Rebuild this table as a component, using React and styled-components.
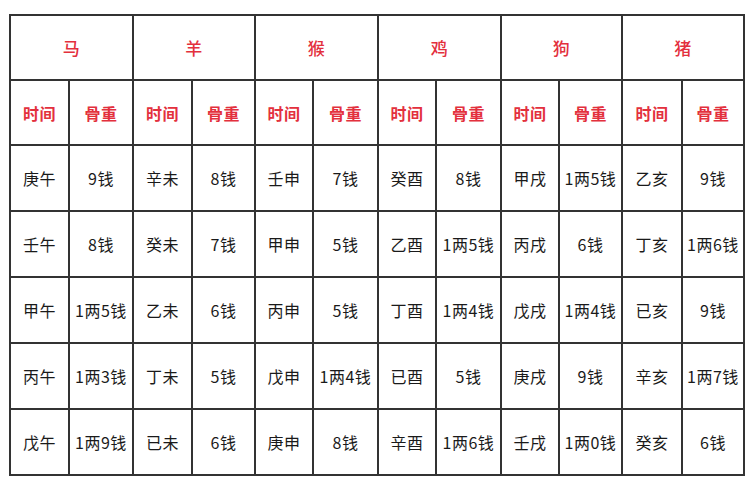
import React from 'react';
import styled, { createGlobalStyle } from 'styled-components';

const GlobalStyle = createGlobalStyle`
  html, body {
    margin: 0;
    padding: 0;
    background: #fff;
  }
  body {
    font-family: "Noto Sans CJK SC", "Noto Sans", sans-serif;
  }
`;

const Page = styled.div`
  width: 750px;
  height: 500px;
  padding: 14px 0 0 9px;
  box-sizing: border-box;
  background: #fff;
`;

const Table = styled.table`
  border-collapse: collapse;
  table-layout: fixed;
  width: 736px;
  border: 2px solid #333;
`;

const Cell = styled.td`
  border: 2px solid #333;
  height: ${p => p.$h || 62}px;
  padding: 0;
  text-align: center;
  vertical-align: middle;
  font-size: 16px;
  color: #1a1a1a;
  white-space: nowrap;
  letter-spacing: 0.5px;
`;

const HeadCell = styled(Cell).attrs({ as: 'th' })`
  color: #e3303d;
  font-weight: ${p => (p.$big ? 500 : 700)};
  font-size: ${p => (p.$big ? 17 : 16)}px;
`;

const Col = styled.col`
  width: ${p => p.$w}px;
`;

const widths = [59, 64, 59, 63, 58, 65, 58, 65, 58, 63, 60, 62];

const groups = [
  { name: '马', rows: [['庚午', '9钱'], ['壬午', '8钱'], ['甲午', '1两5钱'], ['丙午', '1两3钱'], ['戊午', '1两9钱']] },
  { name: '羊', rows: [['辛未', '8钱'], ['癸未', '7钱'], ['乙未', '6钱'], ['丁未', '5钱'], ['已未', '6钱']] },
  { name: '猴', rows: [['壬申', '7钱'], ['甲申', '5钱'], ['丙申', '5钱'], ['戊申', '1两4钱'], ['庚申', '8钱']] },
  { name: '鸡', rows: [['癸酉', '8钱'], ['乙酉', '1两5钱'], ['丁酉', '1两4钱'], ['已酉', '5钱'], ['辛酉', '1两6钱']] },
  { name: '狗', rows: [['甲戌', '1两5钱'], ['丙戌', '6钱'], ['戊戌', '1两4钱'], ['庚戌', '9钱'], ['壬戌', '1两0钱']] },
  { name: '猪', rows: [['乙亥', '9钱'], ['丁亥', '1两6钱'], ['已亥', '9钱'], ['辛亥', '1两7钱'], ['癸亥', '6钱']] },
];

export default function App() {
  return (
    <Page>
      <GlobalStyle />
      <Table>
        <colgroup>
          {widths.map((w, i) => <Col key={i} $w={w} />)}
        </colgroup>
        <thead>
          <tr>
            {groups.map(g => (
              <HeadCell key={g.name} colSpan={2} $big $h={63}>{g.name}</HeadCell>
            ))}
          </tr>
          <tr>
            {groups.map(g => (
              <React.Fragment key={g.name}>
                <HeadCell $h={63}>时间</HeadCell>
                <HeadCell $h={63}>骨重</HeadCell>
              </React.Fragment>
            ))}
          </tr>
        </thead>
        <tbody>
          {[0, 1, 2, 3, 4].map(r => (
            <tr key={r}>
              {groups.map(g => (
                <React.Fragment key={g.name}>
                  <Cell $h={64}>{g.rows[r][0]}</Cell>
                  <Cell $h={64}>{g.rows[r][1]}</Cell>
                </React.Fragment>
              ))}
            </tr>
          ))}
        </tbody>
      </Table>
    </Page>
  );
}
